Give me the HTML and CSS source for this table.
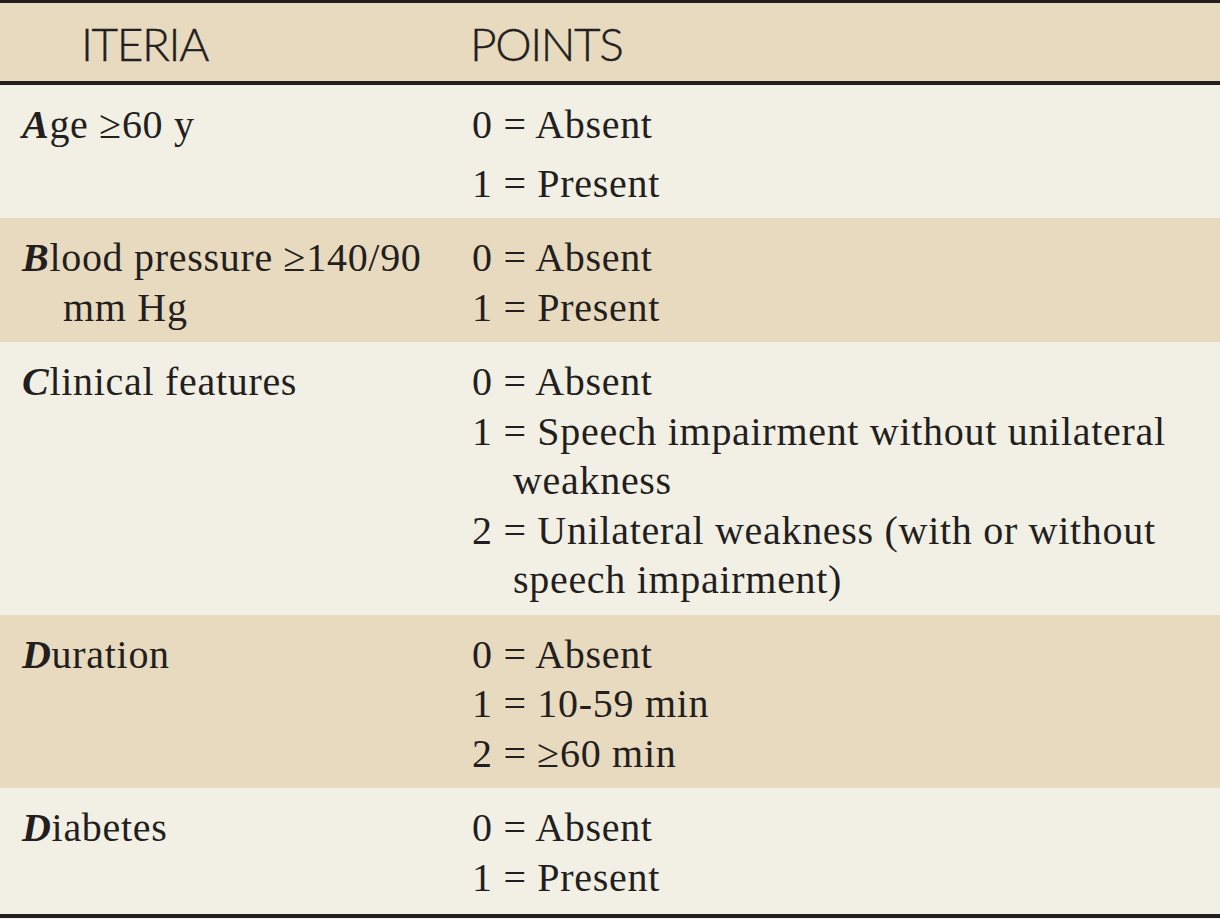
FILE: index.html
```html
<!DOCTYPE html>
<html lang="en">
<head>
<meta charset="utf-8">
<title>ABCD2 score</title>
<link rel="stylesheet" href="styles.css">
</head>
<body>
<div class="table">
  <div class="row head">
    <div class="cell c1"><span class="hd hd-left">ITERIA</span></div>
    <div class="cell c2"><span class="hd">POINTS</span></div>
  </div>
  <div class="row light">
    <div class="cell c1"><p class="item"><b class="key">A</b>ge ≥60 y</p></div>
    <div class="cell c2"><p class="item">0 = Absent</p><p class="item gap">1 = Present</p></div>
  </div>
  <div class="row tan">
    <div class="cell c1"><p class="item"><b class="key">B</b>lood pressure ≥140/90 mm Hg</p></div>
    <div class="cell c2"><p class="item">0 = Absent</p><p class="item">1 = Present</p></div>
  </div>
  <div class="row light">
    <div class="cell c1"><p class="item"><b class="key">C</b>linical features</p></div>
    <div class="cell c2"><p class="item">0 = Absent</p><p class="item">1 = Speech impairment without unilateral weakness</p><p class="item">2 = Unilateral weakness (with or without speech impairment)</p></div>
  </div>
  <div class="row tan">
    <div class="cell c1"><p class="item"><b class="key">D</b>uration</p></div>
    <div class="cell c2"><p class="item">0 = Absent</p><p class="item">1 = 10-59 min</p><p class="item">2 = ≥60 min</p></div>
  </div>
  <div class="row light last">
    <div class="cell c1"><p class="item"><b class="key">D</b>iabetes</p></div>
    <div class="cell c2"><p class="item">0 = Absent</p><p class="item">1 = Present</p></div>
  </div>
</div>
</body>
</html>
```
FILE: styles.css
```css
html, body {
  margin: 0;
  padding: 0;
  background: #f2f0e5;
}
.table {
  width: 1220px;
  border-top: 3px solid #231f20;
  border-bottom: 4px solid #231f20;
  color: #231f20;
  font-family: "Liberation Serif", "Times New Roman", serif;
  font-size: 40px;
  letter-spacing: 0.7px;
  line-height: 49.5px;
}
.row {
  display: grid;
  grid-template-columns: 450px 1fr;
}
.light { background: #f2f0e5; }
.tan { background: #e8dabf; }
.head {
  background: #e8dabf;
  height: 78px;
  border-bottom: 4px solid #231f20;
}
.cell {
  padding: 15px 12px 10px 22px;
}
.last .cell {
  padding-bottom: 12px;
}
.head .cell {
  padding: 0 12px 0 20px;
  display: flex;
  align-items: center;
}
.hd {
  font-family: "Lato", "Liberation Sans", sans-serif;
  font-weight: 300;
  font-size: 46px;
  letter-spacing: -1.4px;
  line-height: 1;
  padding-top: 4px;
  -webkit-text-stroke: 0.4px #231f20;
}
.hd-left {
  padding-left: 61px;
}
.item {
  margin: 0;
  padding-left: 41px;
  text-indent: -41px;
}
.item.gap {
  margin-top: 9px;
}
.key {
  font-weight: bold;
  font-style: italic;
}
```
